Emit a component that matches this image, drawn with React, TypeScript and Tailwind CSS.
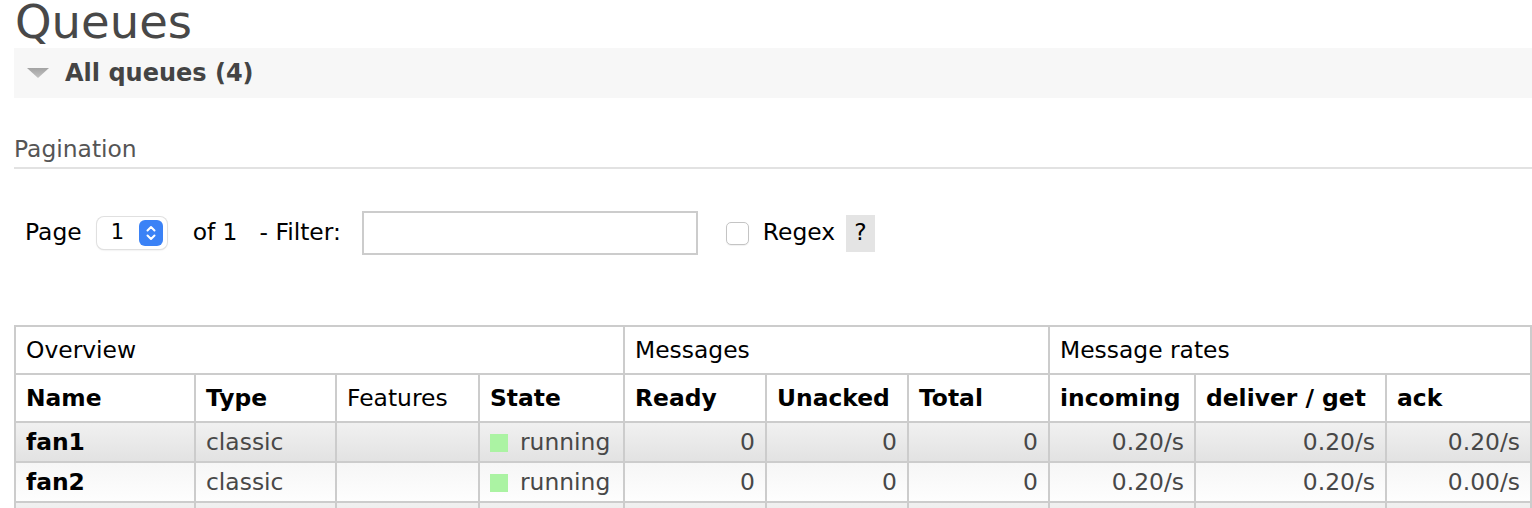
import React from "react";

type Queue = {
  name: string;
  type: string;
  state: string;
  ready: number;
  unacked: number;
  total: number;
  incoming: string;
  deliver: string;
  ack: string;
  durable?: boolean;
};

const queues: Queue[] = [
  { name: "fan1", type: "classic", state: "running", ready: 0, unacked: 0, total: 0, incoming: "0.20/s", deliver: "0.20/s", ack: "0.20/s" },
  { name: "fan2", type: "classic", state: "running", ready: 0, unacked: 0, total: 0, incoming: "0.20/s", deliver: "0.20/s", ack: "0.00/s" },
  { name: "hello", type: "classic", state: "running", ready: 0, unacked: 0, total: 0, incoming: "0.00/s", deliver: "0.00/s", ack: "0.00/s", durable: true },
  { name: "task", type: "classic", state: "running", ready: 0, unacked: 0, total: 0, incoming: "0.00/s", deliver: "0.00/s", ack: "0.00/s", durable: true },
];

const colWidths = [180, 141, 143, 145, 142, 142, 141, 146, 191, 145];

const cell = "border-2 border-[#ccc] px-[10px] pt-[2px] align-middle";
const th = `${cell} text-left font-normal`;
const thBold = `${cell} text-left font-bold`;

function Stepper() {
  return (
    <span className="flex h-[26px] w-[24px] items-center justify-center rounded-[6px] bg-[#3b82f6]">
      <svg width="12" height="18" viewBox="0 0 12 18" fill="none" stroke="white" strokeWidth="2" strokeLinecap="round" strokeLinejoin="round">
        <path d="M2.5 6.5 L6 3 L9.5 6.5" />
        <path d="M2.5 11.5 L6 15 L9.5 11.5" />
      </svg>
    </span>
  );
}

export default function App() {
  return (
    <div className="min-h-screen bg-white font-['DejaVu_Sans',Verdana,sans-serif] text-[23.4px] text-black">
      <h1 className="-mt-[1px] ml-[15px] h-[49px] text-[46.5px] leading-none font-normal text-[#484848]">Queues</h1>

      <div className="ml-[14px] flex h-[50px] items-center bg-[#f7f7f7]">
        <svg className="ml-[13px]" width="22" height="10" viewBox="0 0 22 10">
          <defs>
            <linearGradient id="tri" x1="0" y1="0" x2="0" y2="1">
              <stop offset="0" stopColor="#a3a3a3" />
              <stop offset="1" stopColor="#c2c2c2" />
            </linearGradient>
          </defs>
          <path d="M0 0 H22 L11 10 Z" fill="url(#tri)" />
        </svg>
        <span className="ml-[16px] text-[24px] font-bold text-[#444]">All queues (4)</span>
      </div>

      <div className="ml-[14px] mt-[36px] border-b-2 border-[#e2e2e2] pb-[3px] leading-[30px] text-[#555]">Pagination</div>

      <div className="ml-[25px] mt-[41px] flex h-[46px] items-center">
        <span>Page</span>
        <span className="ml-[15px] flex h-[32px] w-[70px] items-center justify-between rounded-[7px] bg-white pl-[14px] pr-[4px] shadow-[0_0_0_1px_#e0e0e0,0_1px_2px_rgba(0,0,0,0.15)]">
          <span className="text-[21px]">1</span>
          <Stepper />
        </span>
        <span className="ml-[26px]">of 1</span>
        <span className="ml-[22px]">- Filter:</span>
        <input className="ml-[21px] h-[44px] w-[336px] border-2 border-[#ccc] bg-white outline-none" />
        <span className="ml-[28px] h-[23px] w-[23px] rounded-[5px] border border-[#c4c4c4] bg-white shadow-[0_1px_1px_rgba(0,0,0,0.06)]" />
        <span className="ml-[14px]">Regex</span>
        <span className="ml-[11px] flex h-[37px] w-[29px] items-center justify-center bg-[#e4e4e4]">?</span>
      </div>

      <table className="ml-[14px] mt-[69px] table-fixed border-collapse">
        <colgroup>
          {colWidths.map((w, i) => (
            <col key={i} style={{ width: w }} />
          ))}
        </colgroup>
        <thead>
          <tr className="h-[48px]">
            <th colSpan={4} className={th}>Overview</th>
            <th colSpan={3} className={th}>Messages</th>
            <th colSpan={3} className={th}>Message rates</th>
          </tr>
          <tr className="h-[48px]">
            <th className={thBold}>Name</th>
            <th className={thBold}>Type</th>
            <th className={th}>Features</th>
            <th className={thBold}>State</th>
            <th className={thBold}>Ready</th>
            <th className={thBold}>Unacked</th>
            <th className={thBold}>Total</th>
            <th className={thBold}>incoming</th>
            <th className={thBold}>deliver / get</th>
            <th className={thBold}>ack</th>
          </tr>
        </thead>
        <tbody className="text-[#484848]">
          {queues.map((q, i) => (
            <tr
              key={q.name}
              className={`h-[40px] ${i % 2 === 0 ? "bg-linear-to-b from-[#f1f1f1] to-[#e2e2e2]" : "bg-linear-to-b from-[#f6f6f6] to-[#fefefe]"}`}
            >
              <td className={`${cell} font-bold text-black`}>{q.name}</td>
              <td className={cell}>{q.type}</td>
              <td className={`${cell} text-center`}>
                {q.durable && (
                  <span className="inline-block rounded-[8px] bg-[#a9e4f7] px-[8px] text-[18px] leading-[24px] text-[#333]">D</span>
                )}
              </td>
              <td className={cell}>
                <span className="flex items-center">
                  <span className="mr-[12px] inline-block h-[18px] w-[18px] bg-[#abf3a3]" />
                  {q.state}
                </span>
              </td>
              <td className={`${cell} text-right`}>{q.ready}</td>
              <td className={`${cell} text-right`}>{q.unacked}</td>
              <td className={`${cell} text-right`}>{q.total}</td>
              <td className={`${cell} text-right`}>{q.incoming}</td>
              <td className={`${cell} text-right`}>{q.deliver}</td>
              <td className={`${cell} text-right`}>{q.ack}</td>
            </tr>
          ))}
        </tbody>
      </table>
    </div>
  );
}
